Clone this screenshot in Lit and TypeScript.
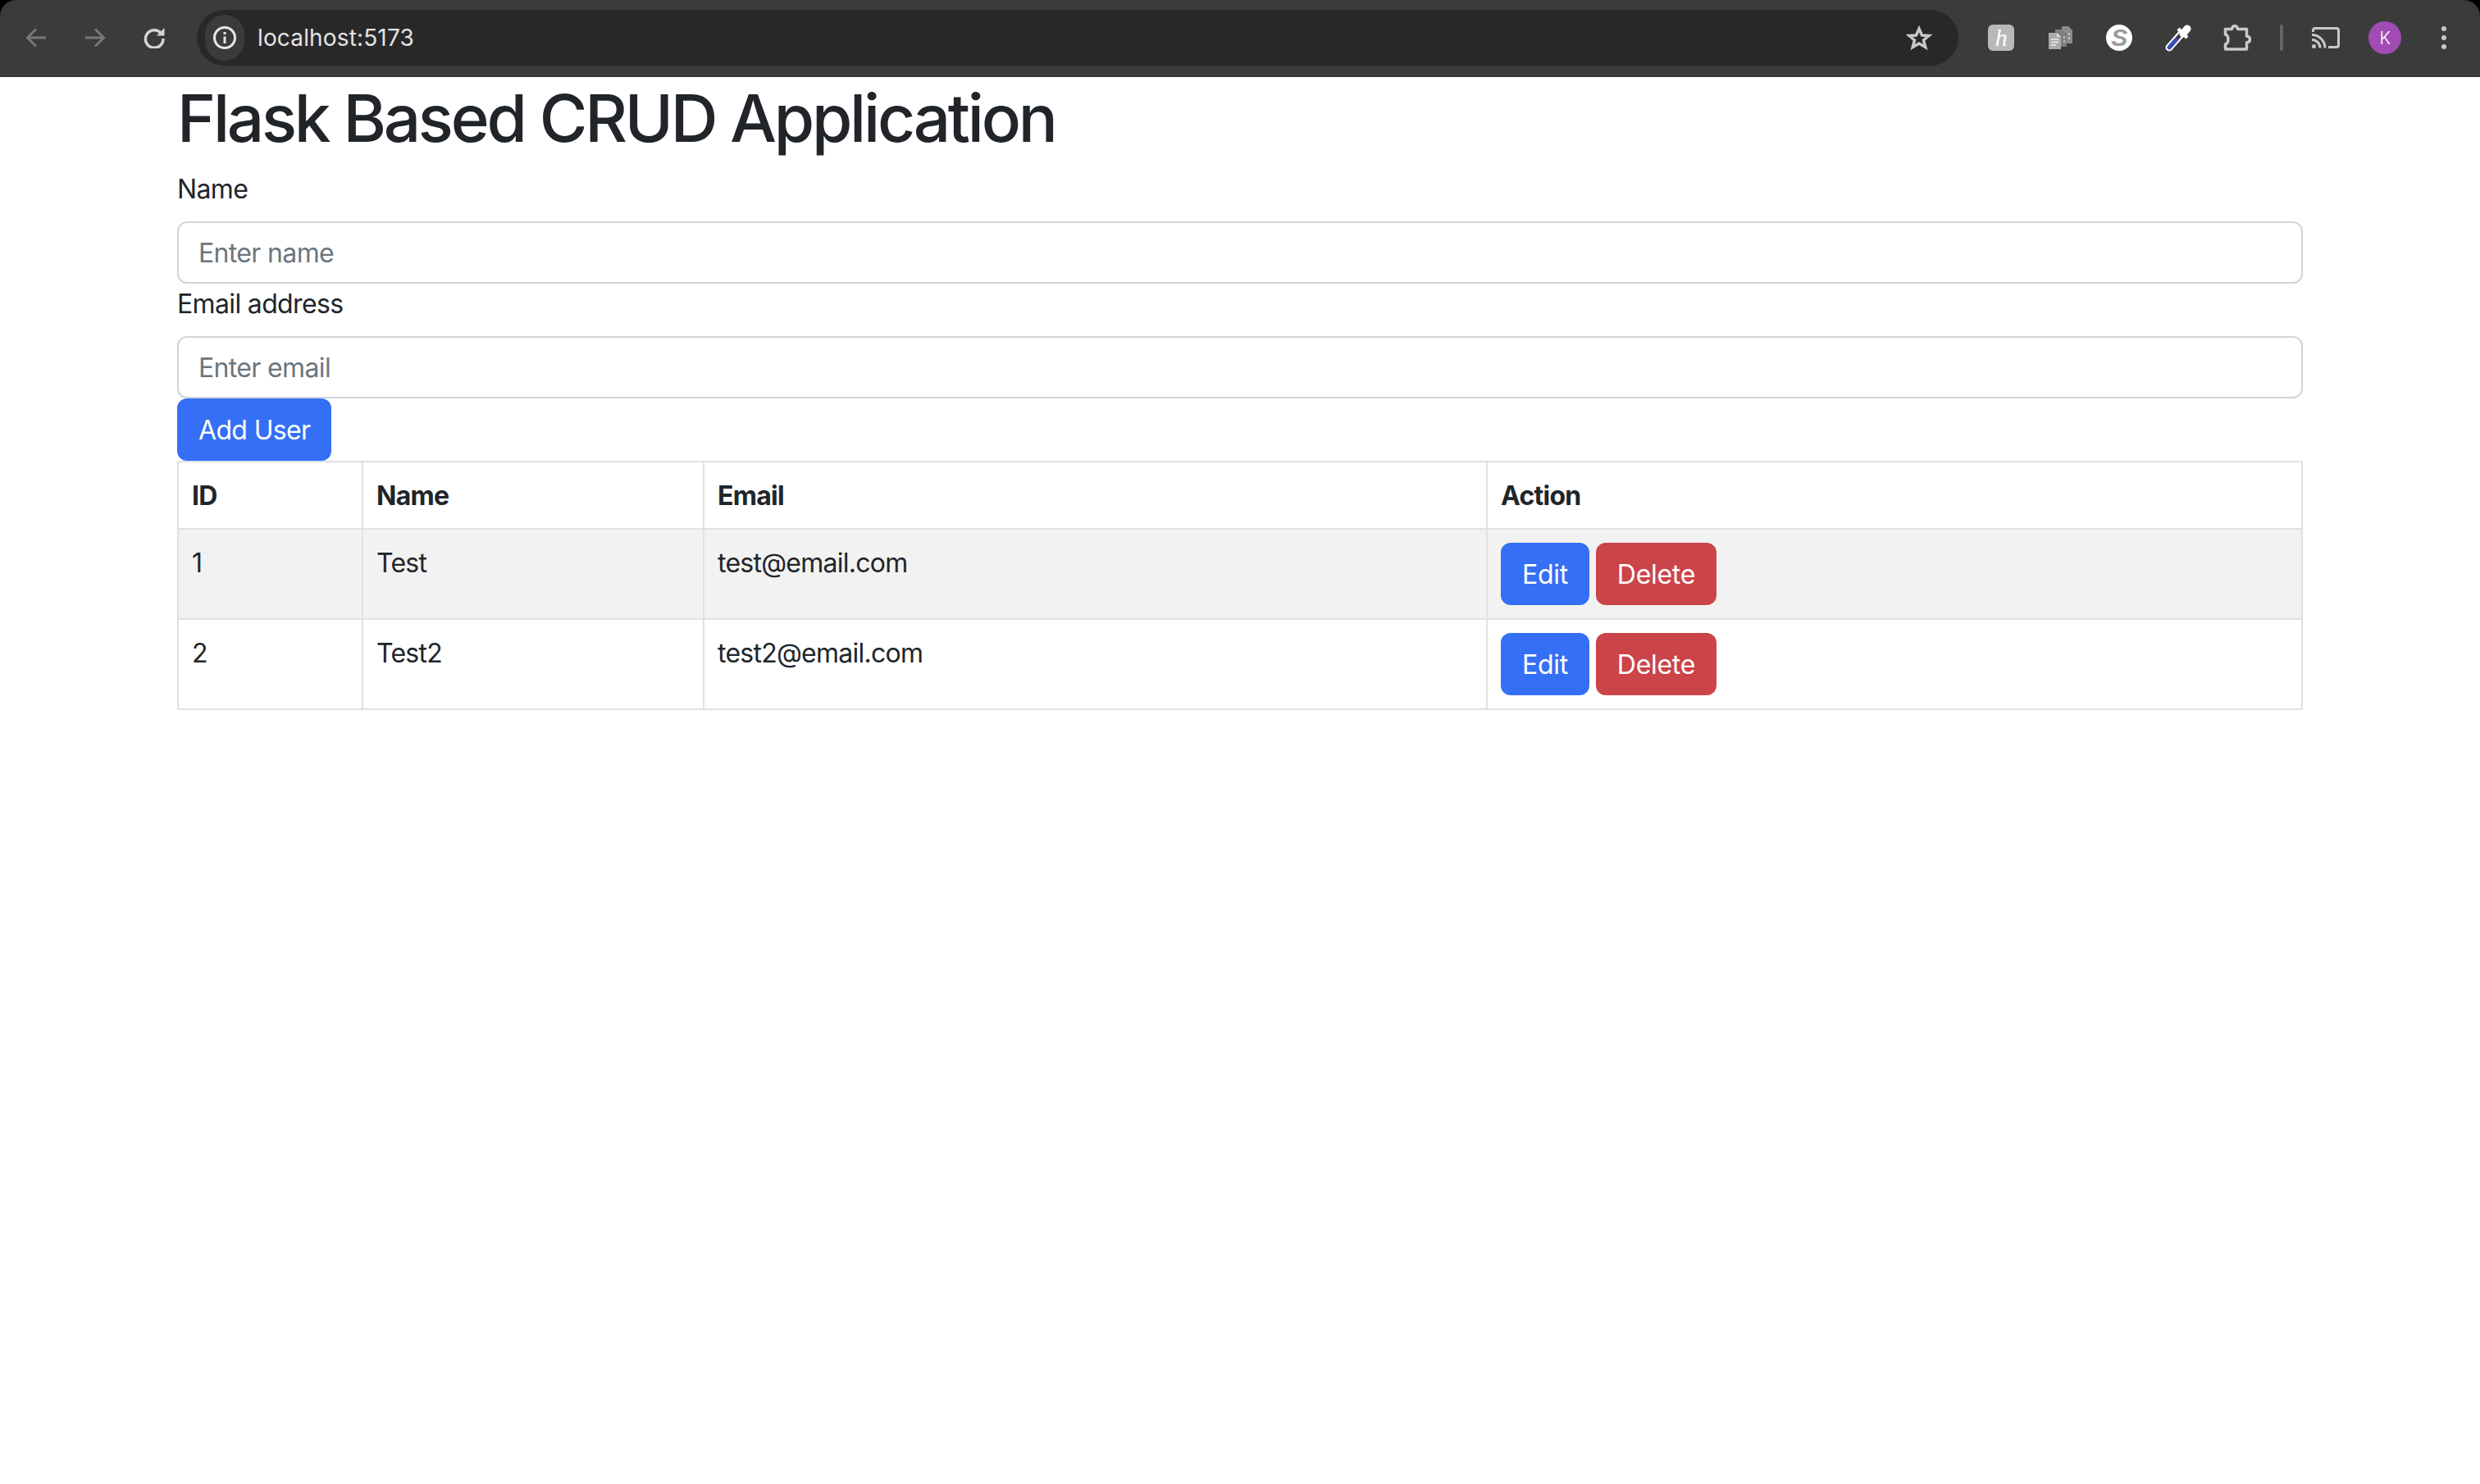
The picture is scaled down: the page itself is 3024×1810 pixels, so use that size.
import { LitElement, html, css } from 'lit'
import { customElement } from 'lit/decorators.js'

interface User {
  id: number
  name: string
  email: string
}

const users: User[] = [
  { id: 1, name: 'Test', email: 'test@email.com' },
  { id: 2, name: 'Test2', email: 'test2@email.com' }
]

@customElement('browser-bar')
class BrowserBar extends LitElement {
  static styles = css`
    :host {
      display: block;
      background: #000;
    }

    .bar {
      height: 94px;
      box-sizing: border-box;
      display: flex;
      align-items: center;
      padding: 0 8px;
      background: #3b3b3b;
      border-radius: 20px 20px 0 0;
      border-bottom: 2px solid #363636;
    }

    .slot {
      width: 72px;
      height: 72px;
      flex: none;
      display: flex;
      align-items: center;
      justify-content: center;
    }

    .url {
      flex: 1;
      height: 68px;
      margin: 0 16px;
      padding: 0 0 0 10px;
      display: flex;
      align-items: center;
      background: #282828;
      border-radius: 34px;
    }

    .chip {
      width: 48px;
      height: 56px;
      border-radius: 28px;
      background: #3b3b3b;
      display: flex;
      align-items: center;
      justify-content: center;
      flex: none;
    }

    .addr {
      flex: 1;
      margin-left: 16px;
      font: 400 28px Inter, sans-serif;
      letter-spacing: 0.15px;
      color: #e3e3e3;
    }

    .star {
      width: 48px;
      display: flex;
      justify-content: center;
      margin-right: 24px;
    }

    .sep {
      width: 4px;
      height: 32px;
      margin: 0 16px;
      border-radius: 2px;
      background: #666;
      flex: none;
    }

    .h-ext {
      width: 32px;
      height: 32px;
      border-radius: 6px;
      background: #b9b9b9;
      color: #fff;
      font: italic 400 30px 'Liberation Serif', serif;
      display: flex;
      align-items: center;
      justify-content: center;
    }

    .s-ext {
      width: 32px;
      height: 32px;
      border-radius: 50%;
      background: #fff;
      color: #9a9a9a;
      font: italic 700 30px 'Liberation Sans', sans-serif;
      display: flex;
      align-items: center;
      justify-content: center;
    }

    .avatar {
      width: 40px;
      height: 40px;
      border-radius: 50%;
      background: #a04cb4;
      color: #fff;
      font: 300 21px Inter, sans-serif;
      display: flex;
      align-items: center;
      justify-content: center;
    }
  `

  render () {
    return html`
      <div class="bar">
        <div class="slot">
          <svg width="26" height="24" viewBox="0 0 26 24" fill="none" stroke="#787878" stroke-width="3">
            <path d="M25 12H3M13 1.500L2.500 12 13 22.500"/>
          </svg>
        </div>
        <div class="slot">
          <svg width="26" height="24" viewBox="0 0 26 24" fill="none" stroke="#787878" stroke-width="3">
            <path d="M1 12H23M13 1.500L23.500 12 13 22.500"/>
          </svg>
        </div>
        <div class="slot">
          <svg width="26" height="26" viewBox="0 0 26 26" fill="none" stroke="#d4d4d4" stroke-width="3.500">
            <path d="M21 7A10.800 10.800 0 1 0 24 14"/>
            <path d="M25.500 1V10.500H16Z" fill="#d4d4d4" stroke="none"/>
          </svg>
        </div>
        <div class="url">
          <div class="chip">
            <svg width="30" height="30" viewBox="0 0 30 30" fill="none" stroke="#e6e6e6" stroke-width="3">
              <circle cx="15" cy="15" r="12.500"/>
              <path d="M15 13.500V22M15 8v3"/>
            </svg>
          </div>
          <div class="addr">localhost:5173</div>
          <div class="star">
            <svg width="34" height="32" viewBox="0 0 34 32" fill="none" stroke="#c8c8c8" stroke-width="3.500">
              <path d="M17 5L20.500 13 29 13.500 22.500 19 24.800 27.500 17 23 9.200 27.500 11.500 19 5 13.500 13.500 13Z"/>
            </svg>
          </div>
        </div>
        <div class="slot"><div class="h-ext">h</div></div>
        <div class="slot">
          <svg width="29" height="28" viewBox="0 0 29 28">
            <path d="M16 0H24L29 5V21H16Z" fill="#8c8c8c"/>
            <path d="M25 8v3M25 13v3" stroke="#d0d0d0" stroke-width="1.500"/>
            <path d="M8 4H16L22 9V25H8Z" fill="#7f7f7f"/>
            <path d="M19 12v3M19 17v3" stroke="#d0d0d0" stroke-width="1.500"/>
            <path d="M0 8H10L15 13V28H0Z" fill="#ababab"/>
            <path d="M10 8L15 13H10Z" fill="#e0e0e0"/>
            <path d="M3 16H12M3 19.500H12M3 23H9" stroke="#efefef" stroke-width="1.500"/>
          </svg>
        </div>
        <div class="slot"><div class="s-ext">S</div></div>
        <div class="slot">
          <svg width="32" height="34" viewBox="0 0 32 34" fill="none">
            <path d="M5 29L20 12" stroke="#fff" stroke-width="9" stroke-linecap="round"/>
            <path d="M5.500 28.500L20 12" stroke="#3b3b3b" stroke-width="4.500"/>
            <path d="M5 29L13 20" stroke="#3653b8" stroke-width="5" stroke-linecap="round"/>
            <path d="M16 6L27 17" stroke="#fff" stroke-width="4.500"/>
            <path d="M22 12L27 6" stroke="#fff" stroke-width="9" stroke-linecap="round"/>
          </svg>
        </div>
        <div class="slot">
          <svg width="34" height="32" viewBox="0 0 34 32" fill="none" stroke="#c9c9c9" stroke-width="3.500" stroke-linejoin="round">
            <path d="M2.500 5.500H10.500C11 2.500 12.500 1.500 14 1.500S17 2.500 17.500 5.500H28.500V14C31.500 14.500 32.500 16.500 32.500 18S31.500 21.500 28.500 22V30H2.500V24C7 23 7 13 2.500 12Z"/>
          </svg>
        </div>
        <div class="sep"></div>
        <div class="slot">
          <svg width="34" height="26" viewBox="0 0 34 26" fill="none" stroke="#c9c9c9" stroke-width="3">
            <path d="M1.500 6V4Q1.500 1.500 4 1.500H30Q32.500 1.500 32.500 4V22Q32.500 24.500 30 24.500H20"/>
            <path d="M0 9.500A16 16 0 0 1 16 25.500M0 15.500A10 10 0 0 1 10 25.500"/>
            <circle cx="2.500" cy="23.500" r="2.500" fill="#c9c9c9" stroke="none"/>
          </svg>
        </div>
        <div class="slot"><div class="avatar">K</div></div>
        <div class="slot">
          <svg width="8" height="30" viewBox="0 0 8 30" fill="#c9c9c9">
            <circle cx="4" cy="4" r="3"/>
            <circle cx="4" cy="15" r="3"/>
            <circle cx="4" cy="26" r="3"/>
          </svg>
        </div>
      </div>
    `
  }
}

@customElement('app-root')
export class AppRoot extends LitElement {
  static styles = css`
    :host {
      display: block;
      min-height: 1810px;
      background: #fff;
      color: #212529;
      font-family: Inter, sans-serif;
      font-size: 32px;
      line-height: 48px;
      letter-spacing: -0.65px;
    }

    .container {
      width: 2592px;
      margin: 0 auto;
    }

    h1 {
      margin: 0 0 16px;
      padding-top: 4px;
      font-size: 80px;
      font-weight: 500;
      line-height: 92px;
      letter-spacing: -3.25px;
    }

    label {
      display: block;
      margin-bottom: 16px;
      padding-top: 2px;
      line-height: 46px;
    }

    input {
      display: block;
      box-sizing: border-box;
      width: 100%;
      height: 76px;
      padding: 0 24px;
      border: 2px solid #ced4da;
      border-radius: 12px;
      font: inherit;
      letter-spacing: inherit;
      color: #212529;
      outline: none;
    }

    input::placeholder {
      color: #6c757d;
      opacity: 1;
    }

    button {
      display: inline-block;
      box-sizing: border-box;
      height: 76px;
      padding: 2px 24px 0;
      border: 2px solid transparent;
      border-radius: 12px;
      font: inherit;
      letter-spacing: inherit;
      color: #fff;
      vertical-align: top;
    }

    .primary {
      background: #346ff5;
    }

    .danger {
      background: #cb444a;
      margin-left: 8px;
    }

    table {
      width: 100%;
      table-layout: fixed;
      border-collapse: collapse;
    }

    th, td {
      box-sizing: border-box;
      padding: 17px 16px 15px;
      border: 2px solid #dee2e6;
      text-align: left;
      vertical-align: top;
      letter-spacing: -0.75px;
    }

    td.actions {
      padding: 16px;
    }

    td.actions button {
      letter-spacing: -0.3px;
    }

    th {
      font-weight: 700;
    }

    tbody tr:nth-child(odd) td {
      background: #f2f2f2;
    }
  `

  render () {
    return html`
      <browser-bar></browser-bar>
      <div class="container">
        <h1>Flask Based CRUD Application</h1>
        <form @submit="${(e: Event) => e.preventDefault()}">
          <label for="name">Name</label>
          <input id="name" type="text" placeholder="Enter name">
          <label for="email">Email address</label>
          <input id="email" type="email" placeholder="Enter email">
          <button class="primary" type="submit">Add User</button>
        </form>
        <table>
          <colgroup>
            <col style="width: 225px">
            <col style="width: 416px">
            <col style="width: 955px">
            <col>
          </colgroup>
          <thead>
            <tr><th>ID</th><th>Name</th><th>Email</th><th>Action</th></tr>
          </thead>
          <tbody>
            ${users.map(u => html`
              <tr>
                <td>${u.id}</td>
                <td>${u.name}</td>
                <td>${u.email}</td>
                <td class="actions">
                  <button class="primary">Edit</button><button class="danger">Delete</button>
                </td>
              </tr>
            `)}
          </tbody>
        </table>
      </div>
    `
  }
}

void BrowserBar
